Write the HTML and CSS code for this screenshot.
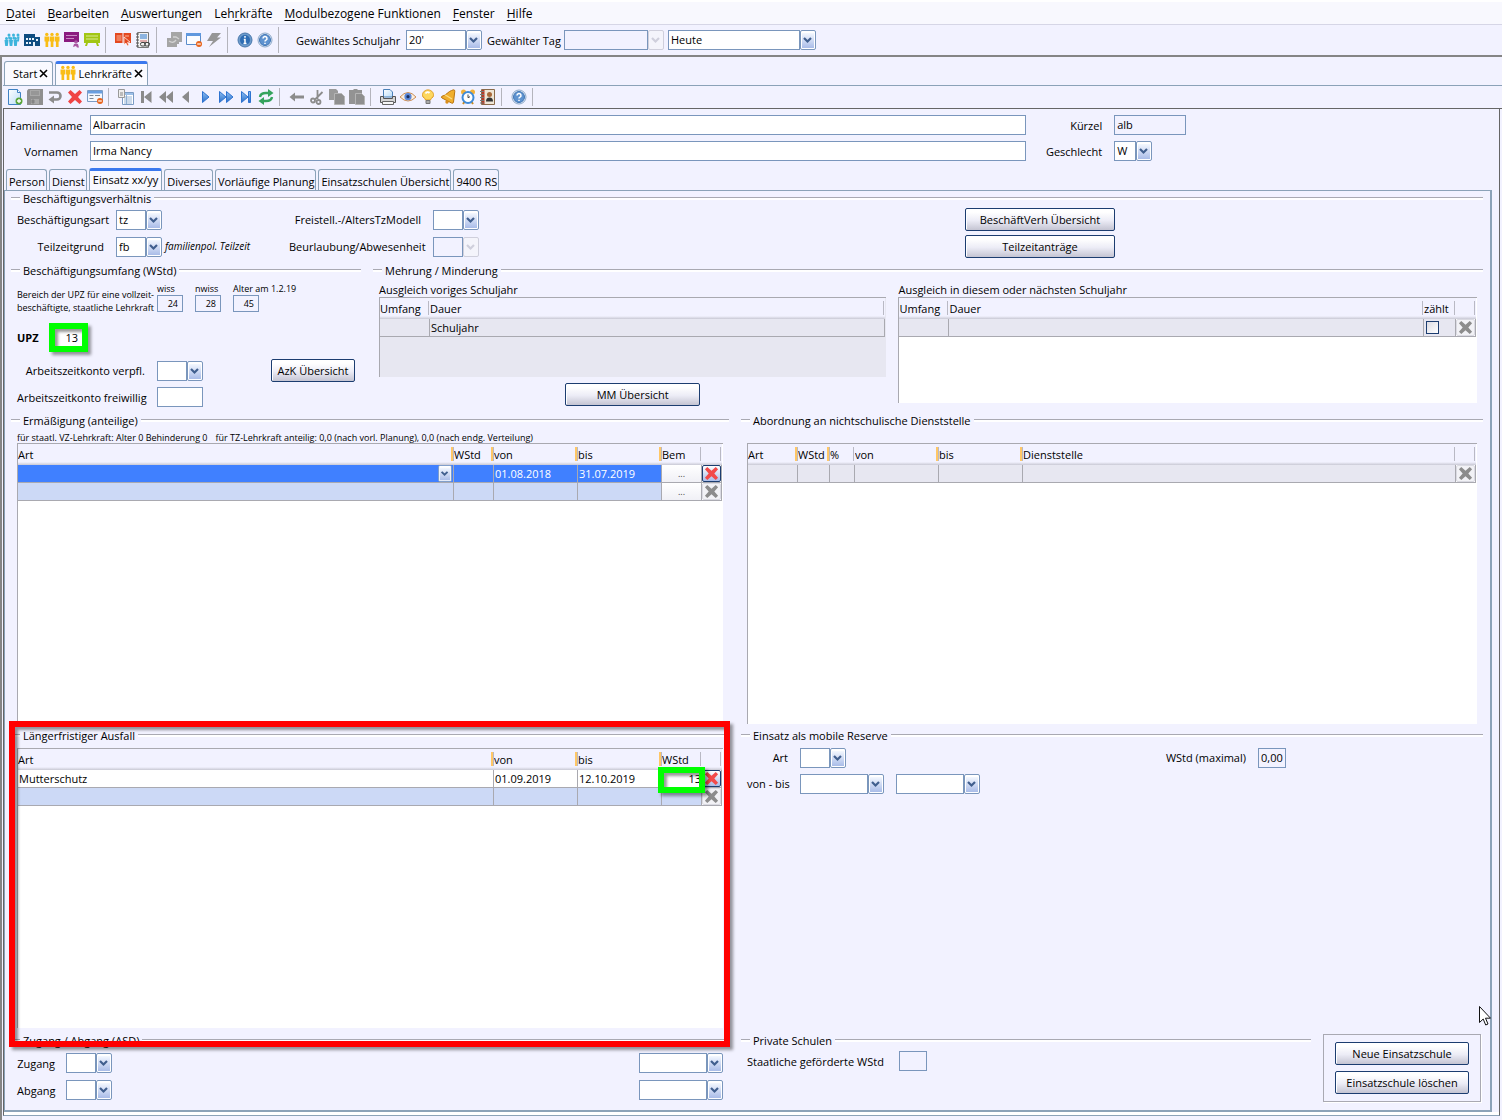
FILE: index.html
```html
<!DOCTYPE html>
<html lang="de">
<head>
<meta charset="utf-8">
<title>Lehrkräfte</title>
<link rel="stylesheet" href="styles.css">
</head>
<body>
<svg class="sprite" aria-hidden="true">
  <defs>
    <linearGradient id="blue" x1="0" y1="0" x2="0" y2="1"><stop offset="0" stop-color="#8fc0f5"/><stop offset="1" stop-color="#2b6fc8"/></linearGradient>
    <linearGradient id="paper" x1="0" y1="0" x2="1" y2="1"><stop offset="0" stop-color="#ffffff"/><stop offset="1" stop-color="#b9dcf8"/></linearGradient>
    <symbol id="people" viewBox="0 0 16 16"><circle cx="2.8" cy="2.4" r="1.7"/><circle cx="8" cy="2.4" r="1.7"/><circle cx="13.2" cy="2.4" r="1.7"/><path d="M.5 4.6h4.6v5H4.2V15H1.5V9.600H.5zM5.700 4.600h4.600v5h-.9V15H6.700V9.600h-1zM10.900 4.600h4.600v5h-.9V15h-2.700V9.600h-1z"/></symbol>
    <symbol id="class" viewBox="0 0 16 16"><circle cx="5" cy="3" r="1.500"/><circle cx="9.500" cy="3" r="1.500"/><circle cx="14" cy="3" r="1.500"/><circle cx="2.500" cy="6.500" r="1.500"/><circle cx="7" cy="6.500" r="1.500"/><circle cx="11.500" cy="6.500" r="1.500"/><path d="M4 4.500h2.500l-.5 3H4.500zM8.500 4.500H11l-.5 3H9zM13 4.500h2.500l-.5 5h-1.500zM.5 8h4l-.7 6H1.200zM5 8h4l-.7 6H5.700zM9.500 8h4l-.7 6h-2.600z"/></symbol>
    <symbol id="help" viewBox="0 0 16 16"><circle cx="8" cy="8" r="7" fill="#eef4fb" stroke="#8aa6c8"/><circle cx="8" cy="8" r="5.500" fill="#5f93d0" stroke="#3f74b4"/><path d="M6 6.500a2 2 0 1 1 3 1.700q-1 .5-1 1.300M8 10.700v1.300" fill="none" stroke="#fff" stroke-width="1.500"/></symbol>
    <symbol id="cross" viewBox="0 0 16 16"><path d="M1 3.500 3.500 1 8 5l4.500-4L15 3.500 11 8l4 4.500-2.500 2.500L8 11l-4.500 4L1 12.500 5 8z"/></symbol>
    <symbol id="close" viewBox="0 0 9 9"><path d="M1 1l7 7M8 1 1 8" stroke="#000" stroke-width="1.600" fill="none"/></symbol>
    <symbol id="minus" viewBox="0 0 6 6"><circle cx="3" cy="3" r="3" fill="#e8641c"/><path d="M1.200 3h3.600" stroke="#fff" stroke-width="1.200"/></symbol>
  </defs>
</svg>

<nav class="menubar">
  <a href="#"><u>D</u>atei</a><a href="#"><u>B</u>earbeiten</a><a href="#"><u>A</u>uswertungen</a><a href="#">Leh<u>r</u>kräfte</a><a href="#"><u>M</u>odulbezogene Funktionen</a><a href="#"><u>F</u>enster</a><a href="#"><u>H</u>ilfe</a>
</nav>

<div class="toolbar main-tools">
  <button class="tool" aria-label="Schüler"><svg fill="#3db4dc"><use href="#class"/></svg></button>
  <button class="tool" aria-label="Schule"><svg viewBox="0 0 16 16"><path d="M0 2h11v3h5v9H0z" fill="#0f4c81"/><path d="M2 6h2v2H2zM5 6h2v2H5zM8 6h2v2H8zM2 10h2v2H2zM5 10h2v2H5zM12 7h2v2h-2zM9 10h2v4H9z" fill="#e8f2fa"/></svg></button>
  <button class="tool" aria-label="Lehrkräfte"><svg fill="#f9bd16"><use href="#people"/></svg></button>
  <button class="tool" aria-label="Unterricht"><svg viewBox="0 0 16 16"><path d="M0 0h15v10H0z" fill="#8a1a7f"/><path d="M2 3.500h11M2 6.500h8" stroke="#c98ac4"/><circle cx="12" cy="10" r="1.800" fill="#a958a2"/><path d="M10 12h4l1 3.500h-2L12 14l-3 1z" fill="#a958a2"/></svg></button>
  <button class="tool" aria-label="Klassen"><svg viewBox="0 0 16 16"><path d="M0 1h16v10H0z" fill="#a2c614"/><path d="M2 4h12M2 7h12" stroke="#d9ea95"/><path d="M2 11h2l-1 3H1zM12 11h2l1 3h-2z" fill="#a2c614"/></svg></button>
  <span class="sep"></span>
  <button class="tool" aria-label="Katalog"><svg viewBox="0 0 16 16"><path d="M0 1h7.500v10H0zM8.500 1H16v10H8.500z" fill="#e4481f"/><path d="M1.500 4h5M1.500 6h5M1.500 8h5M10 4h4" stroke="#f9b49c"/><path d="m9 5 6 5-2.500.5L14 13l-1.500 1-1.500-2.800L9 12.500z" fill="#e4481f" stroke="#fff" stroke-width=".7"/></svg></button>
  <button class="tool" aria-label="Berichte"><svg viewBox="0 0 16 16"><path d="M2.500.5h11v15h-11z" fill="#f2f2f2" stroke="#777"/><path d="M1 2h3M1 5h3M1 8h3M1 11h3M1 14h3" stroke="#555"/><path d="M5 2h7v5H5z" fill="#8db4e0"/><path d="M5 9h7" stroke="#c66"/><rect x="5.500" y="10.500" width="5" height="3.500" rx="1.500" fill="none" stroke="#444"/><rect x="9.500" y="10.500" width="5" height="3.500" rx="1.500" fill="none" stroke="#444"/></svg></button>
  <span class="sep"></span>
  <button class="tool" aria-label="Verteilen" disabled><svg viewBox="0 0 16 16"><path d="M5 0h11v10h-3v2h-2v3H1V6h4z" fill="#a5a5a5"/><path d="M3 9q4 3 7-1M7 5h3l3 2" fill="none" stroke="#d2d2d2" stroke-width="1.300"/></svg></button>
  <button class="tool" aria-label="Fenster schließen"><svg viewBox="0 0 16 16"><path d="M.5 1.500h14v11H.5z" fill="#fafcff" stroke="#5a8ccb"/><path d="M0 1h15v3H0z" fill="#5f98de"/><use href="#minus" x="10" y="9" width="6" height="6"/></svg></button>
  <button class="tool" aria-label="Ausführen" disabled><svg viewBox="0 0 16 16"><path d="M6 1h9l-4 4.500h4L3 15l4-6H1z" fill="#969696"/></svg></button>
  <span class="sep"></span>
  <button class="tool" aria-label="Info"><svg viewBox="0 0 16 16"><circle cx="8" cy="8" r="7" fill="#6d9bcb" stroke="#4a78ac"/><circle cx="8" cy="8" r="5" fill="#2e6db4"/><path d="M8 4v1.800M6.800 7.500H8v4M6.500 11.500h3" stroke="#fff" stroke-width="1.500" fill="none"/></svg></button>
  <button class="tool" aria-label="Hilfe"><svg><use href="#help"/></svg></button>
  <span class="sep"></span>
  <label class="year" for="jahr">Gewähltes Schuljahr</label>
  <select class="combo w76" id="jahr"><option>20'</option></select>
  <label class="day" for="tag">Gewählter Tag</label>
  <select class="combo w100" id="tag" disabled><option></option></select>
  <select class="combo w148" aria-label="Tag"><option>Heute</option></select>
</div>

<div class="workspace">
  <div class="tabs outer">
    <div class="tab"><a href="#">Start</a><button aria-label="Start schließen"><svg><use href="#close"/></svg></button></div>
    <div class="tab active"><svg class="tab-icon" fill="#f9bd16"><use href="#people"/></svg><a href="#">Lehrkräfte</a><button aria-label="Lehrkräfte schließen"><svg><use href="#close"/></svg></button></div>
  </div>

  <div class="toolbar sub-tools">
    <button class="tool" aria-label="Neu"><svg viewBox="0 0 16 16"><path d="M1.500.5h9l3 3v12h-12z" fill="url(#paper)" stroke="#3f82c4"/><path d="M10.500.5v3h3" fill="#fff" stroke="#3f82c4"/><circle cx="12" cy="12" r="3.500" fill="#5aa63a"/><path d="M12 10v4M10 12h4" stroke="#fff" stroke-width="1.300"/></svg></button>
    <button class="tool" aria-label="Speichern" disabled><svg viewBox="0 0 16 16"><path d="M0 1.500 1.500 0H16v16H0z" fill="#8f8f8f"/><path d="M3 1h10v6H3zM4 10h8v5H4z" fill="#a9a9a9"/><path d="M4 3h8M4 5h8M5 11h2v3H5z" stroke="#858585" fill="#858585"/></svg></button>
    <button class="tool" aria-label="Rückgängig" disabled><svg viewBox="0 0 16 16"><path d="M2 3.500h8a3.500 3.500 0 0 1 0 7H5" fill="none" stroke="#8c8c8c" stroke-width="2.600"/><path d="M7 6.500v8L1.500 10.500z" fill="#8c8c8c"/></svg></button>
    <button class="tool" aria-label="Löschen"><svg fill="#f04444"><use href="#cross"/></svg></button>
    <button class="tool" aria-label="Maske schließen"><svg viewBox="0 0 16 16"><path d="M.5 1.500h15v11H.5z" fill="#f5f8fd" stroke="#7b9cc4"/><path d="M1 2h14v2.500H1z" fill="#6a9fe0"/><path d="M2.500 6.500h4M2.500 9.500h4M8 6.500h5" stroke="#7c8896"/><use href="#minus" x="10" y="9" width="6" height="6"/></svg></button>
    <span class="sep"></span>
    <button class="tool" aria-label="Liste"><svg viewBox="0 0 16 16"><path d="M4.500 3.500h11v12h-11z" fill="#fff" stroke="#7b9cc4"/><path d="M5 4h10v2H5z" fill="#9dc0e8"/><path d="M6 8h8M6 10h8M6 12h8M6 14h8M8.500 6v9" stroke="#7fa3cc" stroke-width=".8"/><path d="M.5.5h6v8h-6z" fill="#eee" stroke="#999"/><path d="M2 3h3v4H2z" fill="#bbb"/></svg></button>
    <button class="tool" aria-label="Erster" disabled><svg viewBox="0 0 16 16" fill="#8a8a8a"><path d="M3 2h3v12H3zM13.500 2v12L6 8z"/></svg></button>
    <button class="tool" aria-label="Schnell zurück" disabled><svg viewBox="0 0 16 16" fill="#8a8a8a"><path d="M8 2v12L1 8zM15 2v12L8 8z"/></svg></button>
    <button class="tool" aria-label="Zurück" disabled><svg viewBox="0 0 16 16" fill="#8a8a8a"><path d="M11 2v12L4 8z"/></svg></button>
    <button class="tool" aria-label="Weiter"><svg viewBox="0 0 16 16" fill="url(#blue)" stroke="#2e73d0"><path d="M4.500 2.500v11L11 8z"/></svg></button>
    <button class="tool" aria-label="Schnell vor"><svg viewBox="0 0 16 16" fill="url(#blue)" stroke="#2e73d0"><path d="M1.500 2.500v11L8 8zM8.500 2.500v11L15 8z"/></svg></button>
    <button class="tool" aria-label="Letzter"><svg viewBox="0 0 16 16" fill="url(#blue)" stroke="#2e73d0"><path d="M3.500 2.500v11L10 8zM10.500 2.500h2v11h-2z"/></svg></button>
    <button class="tool" aria-label="Aktualisieren"><svg viewBox="0 0 16 16" fill="none" stroke="#35a35d" stroke-width="2.400"><path d="M2 8q.5-4 6-4h3M14 8q-.5 4-6 4H5"/><path d="M10 0v8l5.500-4zM6 8v8L.5 12z" fill="#35a35d" stroke="none"/></svg></button>
    <span class="sep"></span>
    <button class="tool" aria-label="Pfeil" disabled><svg viewBox="0 0 16 16"><path d="M6 3.500v3h9v3H6v3L.5 8z" fill="#8c8c8c"/></svg></button>
    <button class="tool" aria-label="Ausschneiden" disabled><svg viewBox="0 0 16 16" fill="none" stroke="#8c8c8c" stroke-width="1.800"><path d="M8.500 1v9M13.500 3 6 10.500"/><circle cx="4" cy="11.500" r="2"/><circle cx="9.500" cy="13" r="2"/></svg></button>
    <button class="tool" aria-label="Kopieren" disabled><svg viewBox="0 0 16 16"><path d="M0 0h7l2 2v9H0z" fill="#9a9a9a"/><path d="M5.500 4.500h7l3 3v8h-10z" fill="#8f8f8f" stroke="#b5b5b5"/></svg></button>
    <button class="tool" aria-label="Einfügen" disabled><svg viewBox="0 0 16 16"><path d="M0 1h4l1-1h3l1 1h4v14H0z" fill="#939393"/><path d="M6.500 4.500h6l3 3v8h-9z" fill="#8f8f8f" stroke="#b5b5b5"/></svg></button>
    <span class="sep"></span>
    <button class="tool" aria-label="Drucken"><svg viewBox="0 0 16 16"><path d="M3.500 8V.500h6.500l2.500 2.500v5z" fill="url(#paper)" stroke="#4a80b8"/><path d="M.5 7.500h3v2h9v-2h3v6H.500z" fill="#d5d5d5" stroke="#555"/><path d="M2.500 12.500h11v3h-11z" fill="#f5f5f5" stroke="#666"/></svg></button>
    <button class="tool" aria-label="Ansicht"><svg viewBox="0 0 16 16"><path d="M0 8q8-9 16 0-8 8-16 0z" fill="#fbeede" stroke="#c98d58"/><circle cx="8" cy="7.700" r="3.600" fill="#5b87d8"/><circle cx="8" cy="7.700" r="1.600" fill="#1c2e5c"/></svg></button>
    <button class="tool" aria-label="Hinweis"><svg viewBox="0 0 16 16"><path d="M5.500 11q0-1.500-2.500-3a5.500 5 0 1 1 10 0q-2.500 1.500-2.500 3z" fill="#fdd75e" stroke="#e09c22"/><path d="M5.500 4.500q2-2.500 4-.5" stroke="#fff" stroke-width="1.800" fill="none"/><path d="M6 11.500h4v3H6z" fill="#aaa" stroke="#777"/></svg></button>
    <button class="tool" aria-label="Erinnerung"><svg viewBox="0 0 16 16"><path d="M13.500.8q1.500 0 1.300 1.500L13.500 13q-.5 2-2 1L2 9Q.5 8 2 7.200q2.500-.4 5-2.700T11.500 1.500z" fill="#f0ae2c" stroke="#b87410"/><path d="M5 5.800 12 10" stroke="#fbdc86" stroke-width="1.300"/><circle cx="7" cy="13" r="1.700" fill="#d98e1c"/></svg></button>
    <button class="tool" aria-label="Wecker"><svg viewBox="0 0 16 16"><circle cx="3.500" cy="3" r="2.500" fill="#f2b13a"/><circle cx="12.500" cy="3" r="2.500" fill="#f2b13a"/><path d="m3 15 2-3M13 15l-2-3" stroke="#c78a20" stroke-width="2"/><circle cx="8" cy="8.500" r="5.500" fill="#fff" stroke="#3f8bd8" stroke-width="2"/><path d="M8 5.500v3.200l2-1" stroke="#444" fill="none"/></svg></button>
    <button class="tool" aria-label="Adressbuch"><svg viewBox="0 0 16 16"><path d="M1.500.5h13v15h-13z" fill="#efe6d6" stroke="#8a6a4a"/><path d="M2 1h2.500v14H2z" fill="#b83a26"/><path d="M0 2.500h4M0 5.500h4M0 8.500h4M0 11.500h4M0 14h4" stroke="#777"/><circle cx="9.500" cy="5.500" r="2.500" fill="#a8683a"/><path d="M6 12.500q0-4 3.500-4t3.500 4z" fill="#333"/></svg></button>
    <span class="sep"></span>
    <button class="tool" aria-label="Hilfe zur Maske"><svg><use href="#help"/></svg></button>
    <span class="sep"></span>
  </div>

  <main class="page">
    <div class="identity">
      <label for="fam">Familienname</label><input class="field" id="fam" value="Albarracin">
      <label for="kz">Kürzel</label><input class="field ro" id="kz" value="alb" readonly>
      <label for="vor">Vornamen</label><input class="field" id="vor" value="Irma Nancy">
      <label for="sex">Geschlecht</label><select class="combo w38" id="sex"><option>W</option></select>
    </div>

    <div class="tabs inner">
      <div class="tab"><a href="#">Person</a></div>
      <div class="tab"><a href="#">Dienst</a></div>
      <div class="tab active"><a href="#">Einsatz <span class="term">xx/yy</span></a></div>
      <div class="tab"><a href="#">Diverses</a></div>
      <div class="tab"><a href="#">Vorläufige Planung</a></div>
      <div class="tab"><a href="#">Einsatzschulen Übersicht</a></div>
      <div class="tab"><a href="#">9400 RS</a></div>
    </div>

    <div class="panel">
      <section class="group">
        <h2>Beschäftigungsverhältnis</h2>
        <div class="body employment">
          <label for="bart">Beschäftigungsart</label>
          <div class="inline"><select class="combo w46" id="bart"><option>tz</option></select></div>
          <label for="frei">Freistell.-/AltersTzModell</label>
          <select class="combo w46" id="frei"><option></option></select>
          <button class="btn">BeschäftVerh Übersicht</button>
          <label for="tgr">Teilzeitgrund</label>
          <div class="inline"><select class="combo w46" id="tgr"><option>fb</option></select><em>familienpol. Teilzeit</em></div>
          <label for="beu">Beurlaubung/Abwesenheit</label>
          <select class="combo w46" id="beu" disabled><option></option></select>
          <button class="btn">Teilzeitanträge</button>
        </div>
      </section>

      <div class="scope-row">
        <section class="group">
          <h2>Beschäftigungsumfang (WStd)</h2>
          <div class="body">
            <div class="range">
              <p class="small">Bereich der UPZ für eine vollzeit-<br>beschäftigte, staatliche Lehrkraft</p>
              <div class="mini"><label for="wi">wiss</label><input class="field ro" id="wi" value="24" readonly></div>
              <div class="mini"><label for="nw">nwiss</label><input class="field ro" id="nw" value="28" readonly></div>
              <div class="mini"><label for="al">Alter am 1.2.19</label><input class="field ro" id="al" value="45" readonly></div>
            </div>
            <div class="upz"><label for="upz">UPZ</label><span class="marked"><input id="upz" value="13"><span class="mark green"></span></span></div>
            <div class="azk">
              <label for="azv">Arbeitszeitkonto verpfl.</label><select class="combo w46" id="azv"><option></option></select><button class="btn">AzK Übersicht</button>
              <label for="azf">Arbeitszeitkonto freiwillig</label><input class="field" id="azf">
            </div>
          </div>
        </section>

        <section class="group">
          <h2>Mehrung / Minderung</h2>
          <div class="body balance">
            <div class="stack">
              <h3>Ausgleich voriges Schuljahr</h3>
              <div class="grid-view idle">
                <table>
                  <colgroup><col class="c50"><col></colgroup>
                  <thead><tr><th>Umfang</th><th>Dauer</th></tr></thead>
                  <tbody><tr class="off"><td></td><td>Schuljahr</td></tr></tbody>
                </table>
              </div>
              <button class="btn mm">MM Übersicht</button>
            </div>
            <div class="stack">
              <h3>Ausgleich in diesem oder nächsten Schuljahr</h3>
              <div class="grid-view tall">
                <table>
                  <colgroup><col class="c50"><col><col class="c32"><col class="c20"></colgroup>
                  <thead><tr><th>Umfang</th><th>Dauer</th><th>zählt</th><th></th></tr></thead>
                  <tbody><tr class="off"><td></td><td></td><td><input type="checkbox" aria-label="zählt"></td><td class="act"><button class="del" aria-label="Zeile löschen" disabled><svg><use href="#cross"/></svg></button></td></tr></tbody>
                </table>
              </div>
            </div>
          </div>
        </section>
      </div>

      <div class="split grow">
        <section class="group">
          <h2>Ermäßigung (anteilige)</h2>
          <div class="body fill">
            <p class="small notes"><span>für staatl. VZ-Lehrkraft: Alter 0 Behinderung 0</span><span>für TZ-Lehrkraft anteilig: 0,0 (nach vorl. Planung), 0,0 (nach endg. Verteilung)</span></p>
            <div class="grid-view">
              <table>
                <colgroup><col><col class="c40"><col class="c84"><col class="c84"><col class="c40"><col class="c20"></colgroup>
                <thead><tr><th class="key">Art</th><th class="key">WStd</th><th class="key">von</th><th class="key">bis</th><th>Bem</th><th></th></tr></thead>
                <tbody>
                  <tr class="sel"><td class="pick"><select class="combo" aria-label="Art"><option></option></select></td><td></td><td>01.08.2018</td><td>31.07.2019</td><td class="act"><button class="more">...</button></td><td class="act"><button class="del live" aria-label="Zeile löschen"><svg><use href="#cross"/></svg></button></td></tr>
                  <tr class="next"><td></td><td></td><td></td><td></td><td class="act"><button class="more">...</button></td><td class="act"><button class="del" aria-label="Zeile löschen" disabled><svg><use href="#cross"/></svg></button></td></tr>
                </tbody>
              </table>
            </div>
          </div>
        </section>
        <section class="group">
          <h2>Abordnung an nichtschulische Dienststelle</h2>
          <div class="body fill">
            <p class="small notes"></p>
            <div class="grid-view">
              <table>
                <colgroup><col class="c50"><col class="c32"><col class="c25"><col class="c84"><col class="c84"><col><col class="c20"></colgroup>
                <thead><tr><th class="key">Art</th><th class="key">WStd</th><th>%</th><th class="key">von</th><th class="key">bis</th><th>Dienststelle</th><th></th></tr></thead>
                <tbody><tr class="off"><td></td><td></td><td></td><td></td><td></td><td></td><td class="act"><button class="del" aria-label="Zeile löschen" disabled><svg><use href="#cross"/></svg></button></td></tr></tbody>
              </table>
            </div>
          </div>
        </section>
      </div>

      <div class="split grow">
        <section class="group absence">
          <h2>Längerfristiger Ausfall</h2>
          <div class="body fill">
            <div class="grid-view">
              <table>
                <colgroup><col><col class="c84"><col class="c84"><col class="c40"><col class="c20"></colgroup>
                <thead><tr><th class="key">Art</th><th class="key">von</th><th class="key">bis</th><th>WStd</th><th></th></tr></thead>
                <tbody>
                  <tr><td>Mutterschutz</td><td>01.09.2019</td><td>12.10.2019</td><td class="num">13<span class="mark green"></span></td><td class="act"><button class="del live" aria-label="Zeile löschen"><svg><use href="#cross"/></svg></button></td></tr>
                  <tr class="next"><td></td><td></td><td></td><td></td><td class="act"><button class="del" aria-label="Zeile löschen" disabled><svg><use href="#cross"/></svg></button></td></tr>
                </tbody>
              </table>
            </div>
          </div>
          <span class="mark red"></span>
        </section>
        <section class="group">
          <h2>Einsatz als mobile Reserve</h2>
          <div class="body reserve">
            <label for="rart">Art</label>
            <select class="combo w46" id="rart"><option></option></select>
            <label class="max" for="rmax">WStd (maximal)</label><input class="field ro w28" id="rmax" value="0,00" readonly>
            <label for="rvon">von - bis</label>
            <div class="inline dates"><select class="combo w84" id="rvon"><option></option></select><select class="combo w84" aria-label="bis"><option></option></select></div>
          </div>
        </section>
      </div>

      <div class="split">
        <section class="group">
          <h2>Zugang / Abgang (ASD)</h2>
          <div class="body moves">
            <label for="zu">Zugang</label><select class="combo w46" id="zu"><option></option></select><select class="combo w84" aria-label="Zugang am"><option></option></select>
            <label for="ab">Abgang</label><select class="combo w46" id="ab"><option></option></select><select class="combo w84" aria-label="Abgang am"><option></option></select>
          </div>
        </section>
        <div class="closing">
          <section class="group">
            <h2>Private Schulen</h2>
            <div class="body private"><label for="sg">Staatliche geförderte WStd</label><input class="field ro w28" id="sg" readonly></div>
          </section>
          <div class="actions"><button class="btn">Neue Einsatzschule</button><button class="btn">Einsatzschule löschen</button></div>
        </div>
      </div>
    </div>
  </main>
</div>
<svg class="pointer" viewBox="0 0 12 20" aria-hidden="true"><path d="M.5.5v16l3.700-3.500 2.500 6 2.300-1-2.500-5.800h5z" fill="#fff" stroke="#111"/></svg>
</body>
</html>
```
FILE: styles.css
```css
* { box-sizing: border-box; }

body {
  margin: 0;
  min-height: 100vh;
  display: flex;
  flex-direction: column;
  position: relative;
  background: #f2f2ff;
  color: #000;
  font: 11px/15px "Open Sans", "Noto Sans", sans-serif;
  white-space: nowrap;
}
button, input, select { font: inherit; color: inherit; margin: 0; padding: 0; border: 0; }
a { color: inherit; text-decoration: none; }
h2, h3, p { margin: 0; font: inherit; }
svg { display: block; }
.sprite { position: absolute; width: 0; height: 0; }

.menubar {
  display: flex;
  gap: 12px;
  height: 25px;
  padding: 4px 6px 0;
  border-top: 2px solid #fff;
  border-bottom: 1px solid #d6d6e6;
  background: #f8f8fe;
  font-size: 12px;
  line-height: 16px;
}
.menubar u { text-underline-offset: 2px; }

/* Toolbars */
.toolbar { display: flex; align-items: center; gap: 4px; }
.toolbar > * { flex: none; }
.main-tools { height: 30px; padding-left: 4px; }
.sub-tools { height: 23px; padding-left: 4px; border-bottom: 1px solid #666; }
.tool { width: 16px; height: 16px; background: none; }
.tool svg { width: 16px; height: 16px; }
.sep { width: 1px; height: 26px; margin: 0 5px 0 1px; background: #b4b4bc; }
.sub-tools .sep { height: 18px; }
.year { width: 114px; padding-left: 8px; }
.day { width: 74px; padding-left: 1px; }

/* Fields */
.field { width: 100%; height: 20px; padding: 0 2px 1px; border: 1px solid #7a96bc; background: #fff; }
.ro { background: #f2f2ff; }
.w28 { width: 28px; }
.combo {
  height: 20px;
  padding: 0 17px 1px 3px;
  appearance: none;
  background:
    url("data:image/svg+xml,%3Csvg xmlns='http://www.w3.org/2000/svg' viewBox='0 0 16 20'%3E%3ClinearGradient id='g' x1='0' y1='0' x2='0' y2='1'%3E%3Cstop offset='0' stop-color='%23f4f8ff'/%3E%3Cstop offset='1' stop-color='%23a9bce8'/%3E%3C/linearGradient%3E%3Crect x='.5' y='.5' width='15' height='19' rx='1.500' fill='%23fff' stroke='%237a96bc'/%3E%3Crect x='2' y='3' width='12' height='15' fill='url(%23g)'/%3E%3Cpath d='M4 8 7.500 11.500 11 8' fill='none' stroke='%23405f8e' stroke-width='2.200'/%3E%3C/svg%3E") right / 16px 100% no-repeat,
    linear-gradient(#fff, #fff) 1px 1px / calc(100% - 18px) calc(100% - 2px) no-repeat,
    linear-gradient(#7a96bc, #7a96bc) 0 0 / calc(100% - 16px) 100% no-repeat;
}
.combo:disabled {
  opacity: 1;
  background:
    url("data:image/svg+xml,%3Csvg xmlns='http://www.w3.org/2000/svg' viewBox='0 0 16 20'%3E%3Crect x='.5' y='.5' width='15' height='19' rx='1.500' fill='%23f4f4fb' stroke='%23cfcfdc'/%3E%3Cpath d='M4 8 7.500 11.500 11 8' fill='none' stroke='%23cfcfdc' stroke-width='2.200'/%3E%3C/svg%3E") right / 16px 100% no-repeat,
    linear-gradient(#f2f2ff, #f2f2ff) 1px 1px / calc(100% - 18px) calc(100% - 2px) no-repeat,
    linear-gradient(#7a96bc, #7a96bc) 0 0 / calc(100% - 16px) 100% no-repeat;
}
.w38 { width: 38px; }
.w46 { width: 46px; }
.w76 { width: 76px; }
.w84 { width: 84px; }
.w100 { width: 100px; }
.w148 { width: 148px; }

.btn {
  height: 23px;
  border: 1px solid #1c3d70;
  border-radius: 2px;
  background: linear-gradient(#fff 15%, #ececf6 55%, #c4c4d2);
  box-shadow: inset 1px 1px #fff;
  text-align: center;
}

/* Tab strips */
.workspace {
  flex: 1;
  display: flex;
  flex-direction: column;
  border: solid #858585;
  border-width: 2px 0 0 2px;
  padding: 4px 0 4px 1px;
}
.tabs { display: flex; gap: 2px; padding: 0 1px; align-items: flex-end; border-bottom: 1px solid #8ba2b8; }
.tab {
  display: flex;
  align-items: center;
  border: 1px solid #8ba2b8;
  border-bottom: 0;
  border-radius: 3px 3px 0 0;
  background: #f2f2ff;
}
.tab.active { border-top: 3px solid #3a78ee; }
.tab button { width: 9px; height: 9px; background: none; }
.tab button svg { width: 9px; height: 9px; }
.outer { height: 25px; }
.outer .tab { height: 24px; padding: 0 4px 0 8px; gap: 2px; background: #fafaff; }
.outer .tab.active { padding: 0 4px 3px; }
.tab-icon { width: 16px; height: 16px; }
.inner { height: 22px; margin-top: 8px; padding: 0 2px; }
.inner .tab { height: 21px; padding: 3px 1px 0 2px; }
.inner .tab.active { height: 22px; padding: 0 3px 3px; background: #f8f8ff; }

/* Page */
.page {
  flex: 1;
  display: flex;
  flex-direction: column;
  margin-right: 2px;
  padding-right: 7px;
  border: 1px solid #666;
  border-top: 0;
  border-bottom-color: #8ba2b8;
  box-shadow: inset 0 -3px #fff;
  padding-bottom: 3px;
}
.identity {
  display: grid;
  grid-template-columns: 68px 937fr 64px 72px 294fr;
  gap: 6px 12px;
  padding: 6px 0 0 6px;
  align-items: center;
}
.identity label { text-align: right; }
.identity label:nth-of-type(3) { grid-column: 1; }

.panel {
  flex: 1;
  display: flex;
  flex-direction: column;
  padding: 0 7px 8px 6px;
  border: solid #8ba2b8;
  border-width: 0 2px 2px 1px;
}
.group { display: flex; flex-direction: column; min-width: 0; }
.group h2 { display: flex; align-items: center; gap: 3px; height: 14px; }
.group h2::before, .group h2::after { content: ""; width: 9px; height: 2px; border-top: 1px solid #a9a9b2; background: #fff; }
.group h2::after { flex: 1; }
.body { padding: 5px 6px 0; }
.inline { display: flex; align-items: center; gap: 3px; }
.dates { gap: 12px; }
.small { font-size: 9px; line-height: 13px; }

.employment {
  display: grid;
  grid-template-columns: 87px 161px 132px 520fr 150px 350fr;
  gap: 4px 12px;
  align-items: center;
  padding-top: 3px;
}
.employment label, .azk label, .reserve label, .moves label { text-align: right; }
.employment label:nth-of-type(3) { grid-column: 1; }
.employment em { font-size: 10px; }

.scope-row { display: grid; grid-template-columns: 350px 1fr; gap: 12px; margin-top: 5px; }
.range { display: flex; gap: 12px; align-items: flex-end; padding-top: 1px; }
.range p { width: 128px; }
.mini { display: flex; flex-direction: column; width: 26px; font-size: 9px; line-height: 12px; margin-bottom: 2px; }
.mini .field { height: 17px; padding-right: 4px; text-align: right; }
.upz { display: flex; align-items: center; height: 29px; margin: 9px 0 7px; }
.upz label { width: 38px; font-weight: bold; }
.marked { position: relative; }
.marked input { display: block; width: 27px; height: 17px; padding-right: 4px; text-align: right; }
.azk { display: grid; grid-template-columns: 128px 46px 140px; gap: 5px 12px; align-items: center; }
.azk .btn { margin-left: 56px; }
.azk label:nth-of-type(2) { grid-column: 1; }

.balance { display: grid; grid-template-columns: 507fr 578fr; gap: 12px; }
.stack { display: flex; flex-direction: column; }
.mm { width: 135px; margin: 6px auto 0; }

/* Record grids */
.grid-view { border: solid #a9a9b0; border-width: 1px 0 0 1px; background: #fff; padding-right: 1px; }
.idle { height: 80px; background: #e7e7f1; }
.tall { height: 106px; }
table { width: 100%; table-layout: fixed; border-collapse: separate; border-spacing: 0; }
thead { background: #f2f2ff; }
th {
  height: 21px;
  padding: 0;
  overflow: hidden;
  font-weight: normal;
  text-align: left;
  background:
    linear-gradient(#f2f2ff, #c9c9d4) 0 100% / 100% 3px no-repeat,
    linear-gradient(#b9b9c4, #b9b9c4) right 1px top 3px / 1px 14px no-repeat;
}
th.key {
  background:
    linear-gradient(#f2f2ff, #c9c9d4) 0 100% / 100% 3px no-repeat,
    linear-gradient(#ffc766, #ffc766) right 1px top 3px / 2px 14px no-repeat,
    linear-gradient(#b9b9c4, #b9b9c4) right 0 top 3px / 1px 14px no-repeat;
}
td { position: relative; height: 18px; padding: 0 0 0 1px; border: solid #a9a9b0; border-width: 0 1px 1px 0; line-height: 15px; }
.off td { background: #e7e7f1; }
.next td { background: #ccd9f6; }
.sel td { background: #4080ff; color: #fff; }
td.num { text-align: right; }
td.act { padding: 0; background: #fff; }
td.pick { padding: 0; }
.pick .combo { display: block; width: 16px; height: 17px; margin-left: auto; padding: 0; }
.c20 { width: 20px; }
.c25 { width: 25px; }
.c32 { width: 32px; }
.c40 { width: 40px; }
.c50 { width: 50px; }
.c84 { width: 84px; }
.more { display: block; width: 100%; height: 17px; background: linear-gradient(#fff, #f0f0f6); line-height: 12px; font-size: 9px; color: #444; }
.del { display: block; width: 100%; height: 17px; border: 1px solid #dadae2; border-radius: 2px; background: #f2f2f6; padding-left: 1px; }
.del svg { width: 15px; height: 15px; fill: #8c8c8c; }
.del.live { border-color: #1c3d70; background: linear-gradient(#fff, #a9bce8); }
.del.live svg { fill: #f24a4a; }
input[type=checkbox] { display: block; appearance: none; width: 13px; height: 13px; margin-left: 1px; border: 1px solid #1c3d70; background: linear-gradient(135deg, #dcdce4, #fff); }

.split { display: grid; grid-template-columns: 718fr 742fr; gap: 12px; margin-top: 5px; }
.scope-row + .split { margin-top: 6px; }
.grow { flex: 1 0 auto; }
.fill { flex: 1; display: flex; flex-direction: column; }
.fill .grid-view { flex: 1; }
.notes { display: flex; gap: 8px; height: 12px; margin-top: -1px; }

.reserve { display: grid; grid-template-columns: 41px 180px 1fr 28px; gap: 6px 12px; align-items: center; padding-right: 197px; }
.absence { position: relative; }
.moves { display: grid; grid-template-columns: 38px 46px 1fr; gap: 7px 11px; align-items: center; padding-top: 6px; }
.moves .w84 { justify-self: end; }
.closing { display: grid; grid-template-columns: 1fr 158px; gap: 12px; padding-right: 2px; align-items: start; }
.private { display: grid; grid-template-columns: 140px 28px; gap: 12px; align-items: center; padding-top: 4px; }
.actions { display: flex; flex-direction: column; gap: 6px; margin-top: 1px; padding: 7px 11px; border: 1px solid #a9a9b2; box-shadow: 1px 1px #fff; }

/* Highlight frames laid over the form */
.mark { position: absolute; pointer-events: none; z-index: 1; }
.green { inset: -6px; border: 6px solid #0f0; box-shadow: 3px 3px 3px rgba(0, 0, 0, .4), inset 3px 3px 3px rgba(0, 0, 0, .4); }
.num .green { inset: -3px -4px -6px -4px; }
.red { inset: -8px -1px -19px -2px; border: 6px solid #f00; box-shadow: 3px 3px 3px rgba(0, 0, 0, .4), inset 3px 3px 3px rgba(0, 0, 0, .4); }
.pointer { position: absolute; right: 11px; bottom: 94px; width: 12px; height: 20px; }
```
